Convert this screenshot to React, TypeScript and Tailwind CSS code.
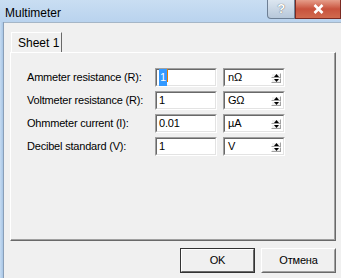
import React from "react";

const font = { fontFamily: '"Liberation Sans", Arial, sans-serif' };

function Sunken({ className, children }: { className?: string; children?: React.ReactNode }) {
  return (
    <div className={`border border-t-[#a0a0a0] border-l-[#a0a0a0] border-b-white border-r-white ${className ?? ""}`}>
      <div className="h-full border border-t-[#696969] border-l-[#696969] border-b-[#e3e3e3] border-r-[#e3e3e3] bg-white flex items-center px-[2px]">
        {children}
      </div>
    </div>
  );
}

function Spin() {
  return (
    <div className="w-[10px] flex flex-col bg-white">
      <div className="h-1/2 flex items-center justify-center bg-[#f0f0f0] border border-t-white border-l-white border-b-[#a0a0a0] border-r-[#a0a0a0]">
        <svg width="5" height="3" viewBox="0 0 5 3"><path d="M2.5 0L5 3H0Z" fill="#000" /></svg>
      </div>
      <div className="h-1/2 flex items-center justify-center bg-[#f0f0f0] border border-t-white border-l-white border-b-[#a0a0a0] border-r-[#a0a0a0]">
        <svg width="5" height="3" viewBox="0 0 5 3"><path d="M0 0H5L2.5 3Z" fill="#000" /></svg>
      </div>
    </div>
  );
}

const rows = [
  { label: "Ammeter resistance (R):", value: "1", unit: "nΩ", selected: true },
  { label: "Voltmeter resistance (R):", value: "1", unit: "GΩ" },
  { label: "Ohmmeter current (I):", value: "0.01", unit: "µA" },
  { label: "Decibel standard (V):", value: "1", unit: "V" },
];

export default function App() {
  return (
    <div className="w-[341px] h-[278px] overflow-hidden flex flex-col bg-[#f0f0f0] text-[11px] text-black tracking-[-0.2px]" style={font}>
      {/* title bar */}
      <div className="h-[22px] flex items-start bg-gradient-to-b from-[#c9def2] to-[#b9d3ee] relative">
        <span className="text-[12px] mt-[4px] ml-[5px] text-black tracking-normal">Multimeter</span>
        <div className="ml-auto flex">
          <div className="w-[28px] h-[19px] rounded-bl-[4px] border border-t-0 border-[#6d7f94] bg-gradient-to-b from-[#dce6f0] to-[#b7c8da] flex items-center justify-center text-white font-bold text-[13px]" style={{ textShadow: "0 0 1px #333" }}>?</div>
          <div className="w-[46px] h-[19px] border border-t-0 border-[#7a2a22] bg-gradient-to-b from-[#e59d8a] via-[#c8523d] to-[#d06a4f] flex items-center justify-center">
            <svg width="11" height="10" viewBox="0 0 11 10"><path d="M1.5 1L9.5 9M9.5 1L1.5 9" stroke="#fff" strokeWidth="2.6" /></svg>
          </div>
        </div>
      </div>
      <div className="flex-1 flex">
        <div className="w-[3px] bg-gradient-to-r from-[#c6dbf1] to-[#a8c6e6]" />
        <div className="w-px bg-[#8a9fb8]" />
        <div className="flex-1 flex flex-col border-t border-[#a5b6c7]">
          {/* tab control */}
          <div className="mt-[9px] ml-[6px] w-[326px] flex flex-col">
            <div className="flex">
              <div className="ml-px w-[51px] h-[21px] border-t border-l border-white border-r border-r-[#696969] flex items-center pl-[6px] text-[12px] tracking-normal">
                <span>Sheet 1</span>
              </div>
            </div>
            <div className="h-[189px] -mt-px border border-t-white border-l-white border-r-[#696969] border-b-[#696969] relative">
              <div className="absolute left-0 top-px w-[51px] h-px bg-[#f0f0f0] hidden" />
              <div className="h-full border-r border-b border-r-[#a0a0a0] border-b-[#a0a0a0] pt-[15px] pl-[16px] flex flex-col gap-[4px]">
                {rows.map((r, i) => (
                  <div key={i} className="flex items-center h-[19px]">
                    <span className="w-[128px] whitespace-nowrap">{r.label}</span>
                    <Sunken className="w-[62px] h-[19px]">
                      {r.selected ? (
                        <span className="flex">
                          <span className="bg-[#3399ff] text-white px-px">{r.value}</span>
                          <span className="w-px h-[13px] bg-[#e07a00]" />
                        </span>
                      ) : (
                        <span>{r.value}</span>
                      )}
                    </Sunken>
                    <Sunken className="ml-[6px] w-[62px] h-[19px]">
                      <span className="flex-1 pl-px">{r.unit}</span>
                      <Spin />
                    </Sunken>
                  </div>
                ))}
              </div>
            </div>
          </div>
          {/* buttons */}
          <div className="mt-[7px] mr-[5px] flex justify-end gap-[6px]">
            <div className="w-[75px] h-[25px] border border-[#333] flex">
              <div className="flex-1 border border-t-white border-l-white border-r-[#696969] border-b-[#696969] flex items-center justify-center">OK</div>
            </div>
            <div className="w-[75px] h-[25px] border border-t-white border-l-white border-r-[#696969] border-b-[#696969] flex">
              <div className="flex-1 border border-r-[#a0a0a0] border-b-[#a0a0a0] border-t-transparent border-l-transparent flex items-center justify-center">Отмена</div>
            </div>
          </div>
        </div>
      </div>
    </div>
  );
}
